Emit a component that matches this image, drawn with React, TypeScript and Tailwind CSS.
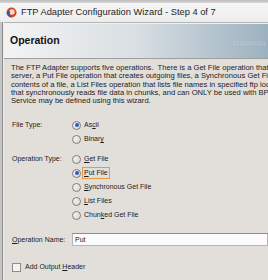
import type { ReactNode } from 'react';

function Mnemonic({ text, at }: { text: string; at: number }) {
  return (
    <>
      {text.slice(0, at)}
      <span className="underline underline-offset-[1px]">{text.charAt(at)}</span>
      {text.slice(at + 1)}
    </>
  );
}

function Radio({ checked, children, focused }: { checked?: boolean; children: ReactNode; focused?: boolean }) {
  return (
    <div className="flex h-[14px] items-center">
      <span className="flex h-[9px] w-[9px] items-center justify-center rounded-full border border-[#7d7b78] bg-gradient-to-br from-[#f4f4f4] to-[#dcdad6]">
        {checked && <span className="h-[4px] w-[4px] rounded-full bg-[#2d5bc8]" />}
      </span>
      <span
        className={`ml-[1px] px-[1px] leading-[10px] ${
          focused ? 'border border-[#e39a4c]' : 'border border-transparent'
        }`}
      >
        {children}
      </span>
    </div>
  );
}

function AppIcon() {
  return (
    <svg width="11" height="11" viewBox="0 0 12 12">
      <circle cx="6" cy="6" r="5.5" fill="#e2401c" />
      <circle cx="6.5" cy="5.5" r="3" fill="#f6d9c8" />
      <path d="M2.2 3.5 A5 5 0 0 0 7 11.4 A4.2 4.2 0 0 1 4.6 5.2 Z" fill="#2a5bb8" />
    </svg>
  );
}

export default function App() {
  return (
    <div className="relative h-[280px] w-[268px] overflow-hidden bg-[#cfcfcf] font-['Liberation_Sans',Arial,sans-serif] text-[7px] text-[#1c1c1c]">
      {/* Title bar */}
      <div className="h-[3px] bg-gradient-to-b from-[#bdbdbd] to-[#d8d8d8]" />
      <div className="flex h-[19px] items-center gap-[4px] bg-gradient-to-b from-[#f6f6f6] to-[#ededed] pl-[6px]">
        <AppIcon />
        <span className="text-[9.3px] text-[#1e1e1e]">FTP Adapter Configuration Wizard - Step 4 of 7</span>
      </div>

      {/* Window body */}
      <div className="flex h-[258px]">
        <div className="flex w-[4px] shrink-0">
          <div className="w-[2px] bg-[#c6c6c6]" />
          <div className="w-[1px] bg-[#8d8d8d]" />
          <div className="w-[1px] bg-[#ececec]" />
        </div>
        <div className="flex min-w-0 flex-1 flex-col border-t border-[#b3b3b3] bg-[#e2dfdb]">
          <div className="h-[1px] bg-[#f2f2f2]" />
          {/* Header band */}
          <div className="relative flex h-[35px] items-center border-b border-[#9e9e9e] bg-gradient-to-r from-[#f3f3f3] via-[#d9dfe3] to-[#9cb1bf] pl-[6px]">
            <span className="text-[10.5px] font-bold text-[#111]">Operation</span>
            <span className="absolute right-[2px] top-[16px] text-[5px] tracking-[0.5px] text-[#c2ced7]">0101010101</span>
          </div>

          <div className="pl-[7px]">
            {/* Description */}
            <div className="whitespace-nowrap pt-[5px] text-[7.6px] leading-[8.25px]">
              <div>The FTP Adapter supports five operations.&nbsp; There is a Get File operation that polls for incoming files on the FTP</div>
              <div>server, a Put File operation that creates outgoing files, a Synchronous Get File operation that synchronously reads the</div>
              <div>contents of a file, a List Files operation that lists file names in specified ftp location, and a Chunked Get File operation</div>
              <div>that synchronously reads file data in chunks, and can ONLY be used with BPEL. Only one operation per</div>
              <div>Service may be defined using this wizard.</div>
            </div>

            {/* File type */}
            <div className="mt-[13px] flex">
              <div className="flex h-[14px] w-[61px] shrink-0 items-center pl-[1px]">File Type:</div>
              <div className="flex flex-col">
                <Radio checked>
                  <Mnemonic text="Ascii" at={2} />
                </Radio>
                <Radio>
                  <Mnemonic text="Binary" at={5} />
                </Radio>
              </div>
            </div>

            {/* Operation type */}
            <div className="mt-[6px] flex">
              <div className="flex h-[14px] w-[61px] shrink-0 items-center pl-[1px]">Operation Type:</div>
              <div className="flex flex-col">
                <Radio>
                  <Mnemonic text="Get File" at={0} />
                </Radio>
                <Radio checked focused>
                  <Mnemonic text="Put File" at={0} />
                </Radio>
                <Radio>
                  <Mnemonic text="Synchronous Get File" at={0} />
                </Radio>
                <Radio>
                  <Mnemonic text="List Files" at={0} />
                </Radio>
                <Radio>
                  <Mnemonic text="Chunked Get File" at={4} />
                </Radio>
              </div>
            </div>

            {/* Operation name */}
            <div className="mt-[11px] flex items-center">
              <div className="w-[61px] shrink-0 pl-[1px]">
                <Mnemonic text="Operation Name:" at={0} />
              </div>
              <div className="flex h-[13px] flex-1 items-center border border-[#b8b4af] border-t-[#8e8a85] bg-[#fbfbfb] pl-[2px]">
                Put
              </div>
            </div>

            {/* Add output header */}
            <div className="mt-[16px] flex items-center gap-[4px] pl-[1px]">
              <span className="h-[9px] w-[9px] border border-[#8f8d8a] bg-[#f4f3f1]" />
              <span>
                Add Output <Mnemonic text="Header" at={0} />
              </span>
            </div>
          </div>
        </div>
      </div>
    </div>
  );
}
